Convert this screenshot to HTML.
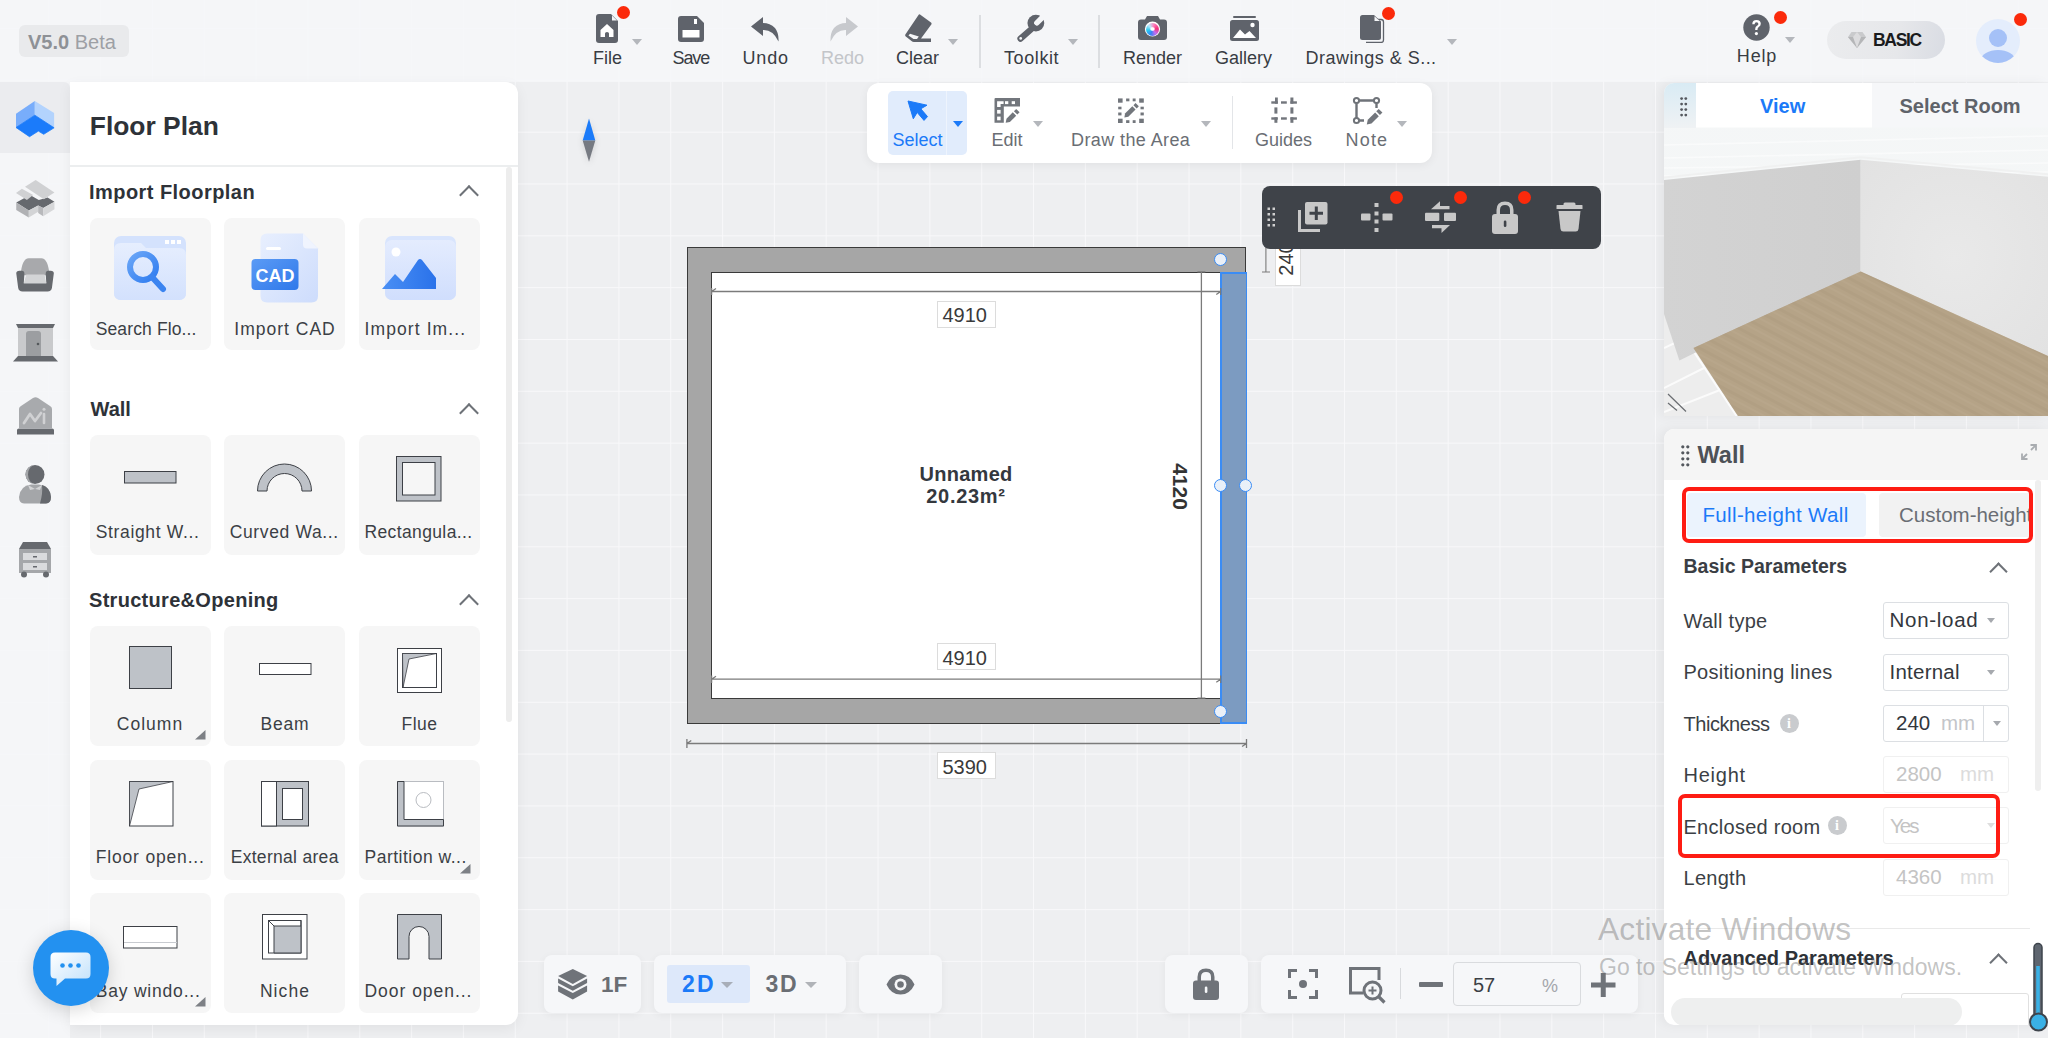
<!DOCTYPE html>
<html><head><meta charset="utf-8">
<style>
*{box-sizing:border-box;margin:0;padding:0}
html,body{width:2048px;height:1038px;overflow:hidden}
body{position:relative;font-family:"Liberation Sans",sans-serif;color:#33373d;
background-color:#eeeff1;
background-image:linear-gradient(to right,#f8f8fa 0,#f8f8fa 1px,transparent 1px),linear-gradient(to bottom,#f8f8fa 0,#f8f8fa 1px,transparent 1px);
background-size:51.84px 51.84px;background-position:48.3px 28px;}
.a{position:absolute}
.t{position:absolute;white-space:nowrap;line-height:1}
/* top bar */
#top{position:absolute;left:0;top:0;width:2048px;height:82px;background:rgba(246,247,249,0.86)}
.tb-l{font-size:18px;color:#383c43}
.tri{position:absolute;width:0;height:0;border-left:5px solid transparent;border-right:5px solid transparent;border-top:6px solid #b4b7bc}
.dot{position:absolute;width:13px;height:13px;border-radius:50%;background:#fb2a0b}
.ic{position:absolute;fill:#5f636b}
/* left */
#rail{position:absolute;left:0;top:82px;width:70px;height:956px;background:rgba(245,246,248,0.92)}
#lp{position:absolute;left:70px;top:82px;width:448px;height:943px;background:#fff;border-radius:0 12px 12px 0;overflow:hidden;box-shadow:0 4px 14px rgba(0,0,0,0.06)}
.card{position:absolute;width:121px;height:120px;background:#f6f6f6;border-radius:8px}
.clbl{font-size:17.5px;color:#3b3f45}
.card .lbl{position:absolute;left:0;width:121px;text-align:center;font-size:17.5px;color:#3b3f45;top:92px;line-height:1;white-space:nowrap}
.sec{position:absolute;left:20px;font-size:20px;font-weight:700;color:#2e3238;line-height:1}
.chev{position:absolute;width:14px;height:14px;border-left:2px solid #6e7278;border-top:2px solid #6e7278;transform:rotate(45deg)}
.dimbox{background:#fff;border:1px solid #dcdcdc}
.dimt{font-size:20px;color:#3a3a3a}
.hdl{position:absolute;width:13px;height:13px;margin:-0.25px 0 0 -0.25px;border-radius:50%;background:#eaf0f8;border:1.6px solid #3a8cf5}
.plbl{font-size:20px;color:#3b3f45;letter-spacing:0.27px}
.pval{font-size:20.5px;color:#33373d}
.pbox{position:absolute;left:218.5px;width:126.5px;height:37px;border:1.2px solid #dcdfe3;border-radius:3px;background:#fff}
.info{position:absolute;width:19px;height:19px;border-radius:50%;background:#c9cbce;color:#fff;font-size:14px;font-weight:700;text-align:center;line-height:19px;font-family:"Liberation Serif",serif}
.bbox{position:absolute;top:955px;height:58px;background:#f6f7f9;border-radius:8px;box-shadow:0 2px 8px rgba(0,0,0,0.05)}
</style></head>
<body>
<div id="top">
  <div class="a" style="left:19px;top:25px;width:110px;height:32px;background:#e9eaec;border-radius:6px"></div>
  <div class="t" style="left:28px;top:32px;font-size:20px;color:#8e9196"><b>V5.0</b> <span style="color:#9da0a5">Beta</span></div>
  <!-- File -->
  <svg class="ic" style="left:596px;top:14px" width="23" height="29" viewBox="0 0 23 29"><path d="M3 0H15L22 7V26Q22 29 19 29H3Q0 29 0 26V3Q0 0 3 0Z"/><path d="M16 1.5V6.5H21Z" fill="#f5f6f8"/><path d="M11 10L4.5 16V23H9V19.5Q9 18 11 18Q13 18 13 19.5V23H17.5V16Z" fill="#fff"/></svg>
  <div class="dot" style="left:617px;top:6px"></div>
  <div class="tri" style="left:632px;top:39px"></div>
  <div class="t tb-l" style="left:593px;top:48.7px">File</div>
  <!-- Save -->
  <svg class="ic" style="left:678px;top:16px" width="26" height="26" viewBox="0 0 26 26"><path d="M3 0H19L26 7V23Q26 26 23 26H3Q0 26 0 23V3Q0 0 3 0Z"/><rect x="16" y="3" width="3" height="5" fill="#fff"/><rect x="4.5" y="14" width="17" height="7.5" fill="#fff"/></svg>
  <div class="t tb-l" style="left:672.5px;top:48.7px;letter-spacing:-1.1px">Save</div>
  <!-- Undo -->
  <svg class="ic" style="left:751px;top:17px" width="30" height="25" viewBox="0 0 30 25"><path d="M12 0L0 9.5L12 19V13Q22 12.5 27.5 24.5Q28 16 24 11Q19 6 12 6Z"/></svg>
  <div class="t tb-l" style="left:742.5px;top:48.7px;letter-spacing:0.85px">Undo</div>
  <!-- Redo -->
  <svg class="ic" style="left:828px;top:17px;fill:#c7c9cd" width="30" height="25" viewBox="0 0 30 25"><path d="M18 0L30 9.5L18 19V13Q8 12.5 2.5 24.5Q2 16 6 11Q11 6 18 6Z"/></svg>
  <div class="t tb-l" style="left:821px;top:48.7px;color:#c3c5c9">Redo</div>
  <!-- Clear -->
  <svg class="ic" style="left:905px;top:14px" width="28" height="28" viewBox="0 0 28 28"><path d="M15 0.5L26 8.5Q27 9.5 26.3 10.5L16 24.5H26V28H9Q7.5 28 6.5 27L0.8 22.5Q-0.3 21.5 0.5 20.3L13.5 1Q14 0 15 0.5ZM5 19.8L3.5 21.5L8.5 25H12L13.8 22.5Z"/></svg>
  <div class="tri" style="left:948px;top:39px"></div>
  <div class="t tb-l" style="left:896px;top:48.7px">Clear</div>
  <div class="a" style="left:979px;top:15px;width:1.5px;height:53px;background:#dcdee1"></div>
  <!-- Toolkit -->
  <svg class="a" style="left:1016.6px;top:13.8px" width="28.3" height="29" viewBox="320 130 420 430"><circle cx="600" cy="265" r="125" fill="#5f636b"/><path d="M615 262L760 117" stroke="#f5f6f8" stroke-width="82" stroke-linecap="round"/><path d="M560 330L372 495" stroke="#5f636b" stroke-width="92" stroke-linecap="round"/><circle cx="375" cy="492" r="20" fill="#f5f6f8"/></svg>
  <div class="tri" style="left:1068px;top:39px"></div>
  <div class="t tb-l" style="left:1004px;top:48.7px;letter-spacing:0.6px">Toolkit</div>
  <div class="a" style="left:1098px;top:15px;width:1.5px;height:53px;background:#dcdee1"></div>
  <!-- Render -->
  <svg class="ic" style="left:1138px;top:16px" width="29" height="24" viewBox="0 0 29 24"><path d="M9 0H20L22 3.5H26Q29 3.5 29 6.5V21Q29 24 26 24H3Q0 24 0 21V6.5Q0 3.5 3 3.5H7Z"/><defs><radialGradient id="rg" cx="0.4" cy="0.4" r="0.6"><stop offset="0" stop-color="#fff"/><stop offset="0.35" stop-color="#f7a1d1"/><stop offset="0.7" stop-color="#5ab7f2"/><stop offset="1" stop-color="#e4407b"/></radialGradient></defs><circle cx="14.5" cy="13" r="7.6" fill="#fff"/></svg>
  <div class="a" style="left:1146px;top:22.5px;width:13px;height:13px;border-radius:50%;background:conic-gradient(from 200deg,#3a7ff5,#27c9f0,#bde9fb,#ff7ab8,#f0307a,#c06ff0,#3a7ff5)"></div><div class="a" style="left:1150.2px;top:26.7px;width:4.6px;height:4.6px;border-radius:50%;background:radial-gradient(#fff 40%,rgba(255,255,255,0))"></div>
  <div class="t tb-l" style="left:1123px;top:48.7px">Render</div>
  <!-- Gallery -->
  <svg class="ic" style="left:1230px;top:16px" width="29" height="25" viewBox="0 0 29 25"><rect x="3" y="0" width="23" height="2" rx="1"/><path d="M2.5 4H26.5Q29 4 29 6.5V22.5Q29 25 26.5 25H2.5Q0 25 0 22.5V6.5Q0 4 2.5 4Z"/><path d="M3 22L10 13.5L15 18.5L19.5 15L26 22Z" fill="#fff"/><circle cx="22.5" cy="9" r="2.2" fill="#fff"/></svg>
  <div class="t tb-l" style="left:1215px;top:48.7px">Gallery</div>
  <!-- Drawings -->
  <svg class="ic" style="left:1360px;top:15px" width="25" height="28" viewBox="0 0 25 28"><path d="M6 4.5H21Q23.5 4.5 23.5 7V25Q23.5 27.5 21 27.5H6" fill="none" stroke="#5f636b" stroke-width="1.3"/><path d="M2.5 0H14L21 6.5V22.5Q21 25 18.5 25H2.5Q0 25 0 22.5V2.5Q0 0 2.5 0Z"/><path d="M14.5 1.3V6H19.8Z" fill="#f5f6f8"/></svg>
  <div class="dot" style="left:1381.5px;top:6.5px"></div>
  <div class="tri" style="left:1447px;top:39px"></div>
  <div class="t tb-l" style="left:1305.5px;top:48.7px;letter-spacing:0.47px">Drawings &amp; S...</div>
  <!-- Help -->
  <svg class="ic" style="left:1742.5px;top:13.5px" width="27" height="27" viewBox="0 0 27 27"><circle cx="13.5" cy="13.5" r="13.2"/><path d="M9.3 10.2Q9.3 6 13.5 6Q17.8 6 17.8 9.8Q17.8 12 15.5 13.3Q14.5 14 14.5 15.5V16H12.2V15Q12.2 12.8 14 11.8Q15.4 11 15.4 9.9Q15.4 8.2 13.5 8.2Q11.6 8.2 11.6 10.2Z" fill="#fff"/><circle cx="13.4" cy="19.6" r="1.6" fill="#fff"/></svg>
  <div class="dot" style="left:1774px;top:11px"></div>
  <div class="tri" style="left:1785px;top:37px"></div>
  <div class="t tb-l" style="left:1736.8px;top:47px;letter-spacing:0.85px">Help</div>
  <!-- BASIC -->
  <div class="a" style="left:1827px;top:21px;width:118px;height:38px;border-radius:19px;background:linear-gradient(100deg,#ebecee 0%,#e6e7ea 60%,#d9dce3 100%)"></div>
  <svg class="a" style="left:1848px;top:32px" width="18" height="16" viewBox="0 0 18 16"><path d="M3.5 0H14.5L18 5L9 16L0 5Z" fill="#c9cacc"/><path d="M0 5H18L9 16Z" fill="#b5b6b8"/><path d="M5 5L9 16L13 5L9 0Z" fill="#dcdcde"/></svg>
  <div class="t" style="left:1873px;top:31.5px;font-size:17.5px;font-weight:700;color:#1a1b1d;letter-spacing:-1.3px">BASIC</div>
  <!-- Avatar -->
  <div class="a" style="left:1976px;top:19px;width:44px;height:44px;border-radius:50%;background:#e4edfc;overflow:hidden">
    <div class="a" style="left:13px;top:10px;width:18px;height:18px;border-radius:50%;background:#a5c1f7"></div>
    <div class="a" style="left:5px;top:31px;width:34px;height:20px;border-radius:50%;background:#a5c1f7"></div>
  </div>
  <div class="dot" style="left:2014px;top:12.5px"></div>
</div>

<div id="rail">
  <div class="a" style="left:0;top:0;width:70px;height:71px;background:#ebecef;border-radius:0 6px 0 0"></div>
  <!-- cube -->
  <svg class="a" style="left:15px;top:18px" width="40" height="38" viewBox="0 0 40 38"><path d="M19.8 1L1 13.8V27.5L19.8 15.2Z" fill="#78adfb"/><path d="M19.8 1L39.1 13V27.8L19.8 15.2Z" fill="#b3d3fd"/><path d="M1 27.5L19.8 15.2L39.1 27.8L28.7 34.3L23.4 31.1L14.5 36.7Z" fill="#1b7bfa" stroke="#1b7bfa" stroke-width="0.8" stroke-linejoin="round"/></svg>
  <!-- blocks -->
  <svg class="a" style="left:15px;top:95.5px" width="41.35" height="41.35" viewBox="40 60 330 330"><path d="M50 255L160 195L230 235L300 215L355 250L265 300L225 280L150 320Z" fill="#66696e"/><path d="M50 255L150 320V375L50 315Z" fill="#b0b1b4"/><path d="M150 320L225 280V330L150 375Z" fill="#d3d4d6"/><path d="M225 280L265 300V365L225 340Z" fill="#b8b9bc"/><path d="M265 300L355 250V310L265 365Z" fill="#d6d7d9"/><path d="M120 130L205 75L355 175L270 230Z" fill="#d0d1d3"/><path d="M48 180L95 145L185 195L135 235Z" fill="#d0d1d3"/></svg>
  <!-- sofa -->
  <svg class="a" style="left:15px;top:174.5px" width="40.1" height="35.7" viewBox="40 690 320 285"><path d="M85 835Q95 700 150 700H250Q305 700 315 835Z" fill="#a8a9ac"/><path d="M50 820Q50 800 75 800H95Q115 800 115 825L110 900H290L285 825Q285 800 305 800H325Q350 800 350 820L335 935Q330 965 300 965H100Q70 965 65 935Z" fill="#66696e"/><path d="M130 830H275L290 900H110Z" fill="#d3d4d6"/></svg>
  <!-- door -->
  <svg class="a" style="left:13px;top:242px" width="45" height="38" viewBox="0 0 45 38"><path d="M3 0H42L40 4H5Z" fill="#66696e"/><rect x="5" y="4" width="35" height="28" fill="#c9cacc"/><path d="M13 32V10Q13 7 16 7H25Q28 7 28 10V32Z" fill="#9c9ea1"/><circle cx="25" cy="20" r="1.3" fill="#55585c"/><path d="M5 32H40L45 37.5H0Z" fill="#66696e"/></svg>
  <!-- ai house -->
  <svg class="a" style="left:15px;top:314px" width="41" height="40" viewBox="0 0 41 40"><path d="M4 32V13Q4 11 6 10L18 2Q20.5 0.5 23 2L35 10Q37 11 37 13V32Z" fill="#a8aaad"/><path d="M9 27L15 18L20 25L26 17" stroke="#d0d1d3" stroke-width="2.8" fill="none" stroke-linecap="round" stroke-linejoin="round"/><path d="M29 18V27" stroke="#d0d1d3" stroke-width="2.6" stroke-linecap="round"/><circle cx="29" cy="13.3" r="1.5" fill="#d0d1d3"/><path d="M2 34Q2 32.5 4 32.5H37Q39 32.5 39 34V38.5H2Z" fill="#66696e"/></svg>
  <!-- person -->
  <svg class="a" style="left:18px;top:383px" width="34" height="39" viewBox="0 0 34 39"><circle cx="17" cy="9.5" r="9.5" fill="#66696e"/><path d="M17 0A9.5 9.5 0 0 0 17 19A7 9.5 0 0 1 17 0Z" fill="#a4a6a9"/><path d="M1 32Q2 21 13 19.5H21Q32 21 33 32Q33 38 28 38.5H6Q1 38 1 32Z" fill="#a4a6a9"/><path d="M24 20Q32 22 33 32Q33 38 28 38.5H22Q25 28 24 20Z" fill="#66696e"/><path d="M10 20L17 24L24 20L22 25L17 24L12 25Z" fill="#d3d4d6"/></svg>
  <!-- cabinet -->
  <svg class="a" style="left:18px;top:460px" width="34" height="36" viewBox="0 0 34 36"><path d="M5 0H29L33 7H1Z" fill="#66696e"/><rect x="1" y="7" width="32" height="24" fill="#a5a7aa"/><rect x="5" y="11" width="24" height="7" fill="#dadbdd"/><rect x="5" y="21" width="24" height="7" fill="#dadbdd"/><rect x="15" y="14" width="4" height="1.5" fill="#66696e"/><rect x="15" y="24" width="4" height="1.5" fill="#66696e"/><circle cx="6" cy="32.5" r="3" fill="#66696e"/><circle cx="28" cy="32.5" r="3" fill="#66696e"/></svg>
</div>
</div>

<div id="lp">
<div class="t" style="left:19.8px;top:31.2px;font-size:26.4px;font-weight:700;color:#2e3238">Floor Plan</div>
<div class="a" style="left:0;top:83px;width:448px;height:1.5px;background:#eceeef"></div>
<div class="a" style="left:436px;top:85px;width:6px;height:555px;background:#ededed;border-radius:3px"></div>
<div class="t sec" style="left:19px;top:100.3px;letter-spacing:0.45px">Import Floorplan</div>
<div class="chev" style="left:392px;top:106px"></div>
<div class="card" style="left:20px;top:136px;height:132px"></div>
<div class="card" style="left:154px;top:136px;height:132px"></div>
<div class="card" style="left:288.5px;top:136px;height:132px"></div>
<div class="t clbl" style="left:25.7px;top:238.9px;letter-spacing:0.13px">Search Flo...</div>
<div class="t clbl" style="left:155px;width:120px;text-align:center;top:238.9px;letter-spacing:1.0px">Import CAD</div>
<div class="t clbl" style="left:294.5px;top:238.9px;letter-spacing:1.1px">Import Im...</div>
<div class="t sec" style="left:20.5px;top:317.4px">Wall</div>
<div class="chev" style="left:392px;top:324px"></div>
<div class="card" style="left:20px;top:352.6px;height:120px"></div>
<div class="card" style="left:154px;top:352.6px;height:120px"></div>
<div class="card" style="left:288.5px;top:352.6px;height:120px"></div>
<div class="t clbl" style="left:25.7px;top:442.2px;letter-spacing:0.66px">Straight W...</div>
<div class="t clbl" style="left:159.7px;top:442.2px;letter-spacing:0.64px">Curved Wa...</div>
<div class="t clbl" style="left:294.5px;top:442.2px;letter-spacing:0.37px">Rectangula...</div>
<div class="t sec" style="left:19px;top:507.7px;letter-spacing:0.3px">Structure&amp;Opening</div>
<div class="chev" style="left:392px;top:515px"></div>
<div class="card" style="left:20px;top:544px;height:120px"></div>
<div class="card" style="left:154px;top:544px;height:120px"></div>
<div class="card" style="left:288.5px;top:544px;height:120px"></div>
<div class="card" style="left:20px;top:677.5px;height:120px"></div>
<div class="card" style="left:154px;top:677.5px;height:120px"></div>
<div class="card" style="left:288.5px;top:677.5px;height:120px"></div>
<div class="card" style="left:20px;top:811px;height:120px"></div>
<div class="card" style="left:154px;top:811px;height:120px"></div>
<div class="card" style="left:288.5px;top:811px;height:120px"></div>
<div class="t clbl" style="left:20px;width:120px;text-align:center;top:633.8px;letter-spacing:1.04px">Column</div>
<div class="t clbl" style="left:155px;width:120px;text-align:center;top:633.8px;letter-spacing:0.77px">Beam</div>
<div class="t clbl" style="left:289.5px;width:120px;text-align:center;top:633.8px;letter-spacing:0.47px">Flue</div>
<div class="t clbl" style="left:25.7px;top:767.2px;letter-spacing:0.83px">Floor open...</div>
<div class="t clbl" style="left:154.7px;width:120px;text-align:center;top:767.2px;letter-spacing:0.3px">External area</div>
<div class="t clbl" style="left:294.5px;top:767.2px;letter-spacing:0.5px">Partition w...</div>
<div class="t clbl" style="left:25.7px;top:900.6px;letter-spacing:0.8px">Bay windo...</div>
<div class="t clbl" style="left:155px;width:120px;text-align:center;top:900.6px;letter-spacing:1.1px">Niche</div>
<div class="t clbl" style="left:294.5px;top:900.6px;letter-spacing:0.97px">Door open...</div>
<svg class="a" style="left:125.1px;top:648.2px" width="11" height="10"><path d="M10.5 0V9.5H0Z" fill="#7d8085"/></svg>
<svg class="a" style="left:390.0px;top:781.7px" width="11" height="10"><path d="M10.5 0V9.5H0Z" fill="#7d8085"/></svg>
<svg class="a" style="left:125.1px;top:915.1px" width="11" height="10"><path d="M10.5 0V9.5H0Z" fill="#7d8085"/></svg>
<svg class="a" style="left:43.0px;top:152.0px" width="74" height="68" viewBox="0 0 74 68"><defs><linearGradient id="g1" x1="0" y1="0" x2="0" y2="1"><stop offset="0" stop-color="#e6eefe"/><stop offset="1" stop-color="#d3e1fd"/></linearGradient><linearGradient id="g2" x1="0" y1="0" x2="1" y2="1"><stop offset="0" stop-color="#6aa6f7"/><stop offset="1" stop-color="#2f7cf0"/></linearGradient></defs><rect x="1" y="2" width="72" height="64" rx="7" fill="#d4e2fd"/><path d="M1 16Q1 9 8 9H28L33 14H66Q73 14 73 21V59Q73 66 66 66H8Q1 66 1 59Z" fill="url(#g1)"/><rect x="52" y="6" width="4" height="4" fill="#fff"/><rect x="58" y="6" width="4" height="4" fill="#fff"/><rect x="64" y="6" width="4" height="4" fill="#fff"/><circle cx="30" cy="33" r="13" fill="none" stroke="url(#g2)" stroke-width="6"/><path d="M39 43L50 55" stroke="#3b84f0" stroke-width="6" stroke-linecap="round"/></svg>
<svg class="a" style="left:180.0px;top:150.0px" width="70" height="72" viewBox="0 0 70 72"><defs><linearGradient id="g3" x1="0" y1="0" x2="1" y2="1"><stop offset="0" stop-color="#e8effe"/><stop offset="1" stop-color="#cddcfc"/></linearGradient><linearGradient id="g4" x1="0" y1="0" x2="1" y2="1"><stop offset="0" stop-color="#5b9bf5"/><stop offset="1" stop-color="#2f78ea"/></linearGradient></defs><path d="M17 1.5H53L68 16.5V64Q68 70.5 61.5 70.5H17Q10.5 70.5 10.5 64V8Q10.5 1.5 17 1.5Z" fill="url(#g3)"/><path d="M53 1.5L68 16.5H57Q53 16.5 53 12.5Z" fill="#f0f4fe"/><rect x="16" y="15" width="15" height="3" rx="1.5" fill="#fff"/><rect x="1.5" y="27" width="47" height="31" rx="4" fill="url(#g4)"/><text x="25" y="50" text-anchor="middle" font-family="Liberation Sans" font-size="18" font-weight="700" fill="#fff">CAD</text></svg>
<svg class="a" style="left:312.0px;top:152.0px" width="76" height="70" viewBox="0 0 76 70"><defs><linearGradient id="g5" x1="0" y1="0" x2="0" y2="1"><stop offset="0" stop-color="#e4ecfe"/><stop offset="1" stop-color="#d0defd"/></linearGradient><linearGradient id="g6" x1="0" y1="0" x2="1" y2="0"><stop offset="0" stop-color="#4a8ff4"/><stop offset="1" stop-color="#2a72ea"/></linearGradient></defs><rect x="3" y="2" width="71" height="64" rx="7" fill="#d9e5fd"/><rect x="3" y="6" width="71" height="60" rx="7" fill="url(#g5)"/><circle cx="14" cy="18" r="4.5" fill="#fff"/><path d="M0 55L13 40L21 48L36 26Q38 24 40 26L54 44V55Z" fill="url(#g6)"/></svg>
<svg class="a" style="left:54.0px;top:389.0px" width="53" height="13" viewBox="0 0 53 13"><rect x="0.5" y="0.5" width="51.5" height="11.5" fill="#bec2c8" stroke="#3d4046" stroke-width="1"/></svg>
<svg class="a" style="left:187.0px;top:381.0px" width="55" height="29" viewBox="0 0 55 29"><path d="M0.5 28A27 27 0 0 1 54.5 28H45A17.5 17.5 0 0 0 10 28Z" fill="#bec2c8" stroke="#3d4046" stroke-width="1"/></svg>
<svg class="a" style="left:326.0px;top:374.0px" width="46" height="46" viewBox="0 0 46 46"><rect x="0.5" y="0.5" width="44.5" height="44.5" fill="#bec2c8" stroke="#3d4046"/><rect x="6.5" y="6.5" width="32.5" height="32.5" fill="#f6f6f6" stroke="#3d4046"/></svg>
<svg class="a" style="left:59.0px;top:564.0px" width="44" height="44" viewBox="0 0 44 44"><rect x="0.5" y="0.5" width="42" height="42" fill="#bec2c8" stroke="#3d4046"/></svg>
<svg class="a" style="left:188.5px;top:581.0px" width="53" height="13" viewBox="0 0 53 13"><rect x="0.5" y="0.5" width="51.5" height="11" fill="#fff" stroke="#3d4046"/></svg>
<svg class="a" style="left:327.0px;top:566.0px" width="46" height="46" viewBox="0 0 46 46"><rect x="0.5" y="0.5" width="44" height="44" fill="#fff" stroke="#3d4046"/><rect x="5.5" y="5.5" width="34" height="34" fill="#fff" stroke="#3d4046"/><path d="M5.5 5.5H39.5L12 11L6 39.5Z" fill="#bec2c8" stroke="#3d4046" stroke-width="0.8"/></svg>
<svg class="a" style="left:59.0px;top:699.0px" width="45" height="46" viewBox="0 0 45 46"><rect x="0.5" y="0.5" width="43.5" height="44.5" fill="#fff" stroke="#3d4046"/><path d="M0.5 0.5H44L10 8L0.5 45Z" fill="#bec2c8" stroke="#3d4046" stroke-width="0.8"/></svg>
<svg class="a" style="left:190.5px;top:699.0px" width="48" height="46" viewBox="0 0 48 46"><rect x="0.5" y="0.5" width="47" height="44.5" fill="#bec2c8" stroke="#3d4046"/><rect x="0.5" y="0.5" width="15" height="44.5" fill="#fff" stroke="#3d4046"/><rect x="21.5" y="7.5" width="20" height="31" fill="#fff" stroke="#3d4046"/></svg>
<svg class="a" style="left:327.0px;top:699.0px" width="47" height="46" viewBox="0 0 47 46"><rect x="0.5" y="0.5" width="46" height="44.5" fill="#fff" stroke="#b9bcc1"/><path d="M0.5 0.5H7V38.5H46.5V45H0.5Z" fill="#bec2c8" stroke="#3d4046"/><circle cx="26.5" cy="19" r="7.5" fill="none" stroke="#b9bcc1"/></svg>
<svg class="a" style="left:53.0px;top:844.0px" width="55" height="23" viewBox="0 0 55 23"><rect x="0.5" y="0.5" width="53.5" height="21.5" fill="#fff" stroke="#3d4046"/><path d="M1 16.5H54" stroke="#c8cbd0"/></svg>
<svg class="a" style="left:192.0px;top:832.0px" width="46" height="46" viewBox="0 0 46 46"><rect x="0.5" y="0.5" width="44.5" height="44.5" fill="#fff" stroke="#3d4046"/><rect x="6.5" y="6.5" width="32.5" height="32.5" fill="#fff" stroke="#3d4046"/><path d="M12 12H39V39H12Z" fill="#bec2c8" stroke="#3d4046"/><path d="M6.5 6.5L12 12M39 6.5V12" stroke="#3d4046"/></svg>
<svg class="a" style="left:327.0px;top:832.0px" width="46" height="46" viewBox="0 0 46 46"><path d="M0.5 0.5H44.5V45H32V22.5A10 10 0 0 0 12 22.5V45H0.5Z" fill="#bec2c8" stroke="#3d4046"/></svg>
</div>

<!-- compass -->
<svg class="a" style="left:582px;top:118px;filter:drop-shadow(0 2px 3px rgba(0,0,0,0.12))" width="14" height="45" viewBox="0 0 14 45"><path d="M7 0.5L13.3 22.5H0.7Z" fill="#1b7bf9"/><path d="M0.7 22.5H13.3L7 43.7Z" fill="#767a82"/></svg>
<!-- floating toolbar -->
<div class="a" style="left:867px;top:83px;width:565px;height:80px;background:#fff;border-radius:12px;box-shadow:0 2px 10px rgba(0,0,0,0.06)"></div>
<div class="a" style="left:888px;top:91px;width:79px;height:64px;background:#e1ecfc;border-radius:5px"></div>
<div class="a" style="left:946px;top:91px;width:1px;height:64px;background:#eef4fd"></div>
<svg class="a" style="left:907px;top:100px" width="22" height="22" viewBox="0 0 22 22"><path d="M1 1L20 5.2L13.8 8.8L20.5 16.6L17 20.4L10.2 12.4L6.3 18.8Z" fill="#1b7af8" stroke="#1b7af8" stroke-width="1" stroke-linejoin="round"/></svg>
<div class="tri" style="left:952.5px;top:121px;border-top-color:#1b7af8"></div>
<div class="t" style="left:892.5px;top:130.9px;font-size:18px;color:#1b7af8">Select</div>
<svg class="a" style="left:994px;top:97px;fill:#72767c" width="27" height="27" viewBox="0 0 27 27"><path d="M0.5 2Q0.5 0.9 1.6 0.9H26V9.6H9.8V25.8H0.5Z"/><path d="M3.1 4.2H9.6V7.1H6.6V10H3.1Z" fill="#fff"/><rect x="11" y="4.2" width="3.3" height="2.9" fill="#fff"/><rect x="17.7" y="4.2" width="3.3" height="2.9" fill="#fff"/><rect x="3.1" y="12.9" width="3.5" height="3.7" fill="#fff"/><rect x="3.1" y="19.6" width="3.5" height="3.7" fill="#fff"/><path d="M11.7 25.8L15.87 25.03L22.2 18.7L18.8 15.3L12.47 21.63Z"/><path d="M23.33 17.57L25.59 15.31L22.19 11.91L19.93 14.17Z"/></svg>
<div class="tri" style="left:1032.5px;top:121px"></div>
<div class="t" style="left:991.5px;top:130.9px;font-size:18px;color:#6a6e74">Edit</div>
<svg class="a" style="left:1118px;top:97.5px;fill:#72767c" width="27" height="27" viewBox="0 0 27 27"><rect x="0" y="0.4" width="4.6" height="4.3"/><rect x="21.2" y="0.4" width="4.6" height="4.3"/><rect x="0" y="20.7" width="4.6" height="4.3"/><rect x="21.2" y="20.7" width="4.6" height="4.3"/><rect x="8.1" y="0.5" width="3.3" height="2.8"/><rect x="14.7" y="0.5" width="2.9" height="2.8"/><rect x="8.1" y="22.2" width="3.3" height="2.8"/><rect x="14.7" y="22.2" width="2.9" height="2.8"/><rect x="0.2" y="8.7" width="3.3" height="2.6"/><rect x="0.2" y="14.5" width="3.3" height="2.9"/><rect x="22.5" y="8.7" width="3.3" height="2.6"/><rect x="22.5" y="14.5" width="3.3" height="2.9"/><path d="M6.4 19.5L10.29 18.87L17.58 11.58L14.32 8.32L7.03 15.61Z"/><path d="M18.71 10.45L20.83 8.33L17.57 5.07L15.45 7.19Z"/></svg>
<div class="tri" style="left:1200.5px;top:121px"></div>
<div class="t" style="left:1071px;top:130.9px;font-size:18px;color:#6a6e74;letter-spacing:0.4px">Draw the Area</div>
<div class="a" style="left:1231.5px;top:96px;width:1.5px;height:53px;background:#e3e5e8"></div>
<svg class="a" style="left:1271px;top:97px;fill:#72767c" width="27" height="27" viewBox="0 0 27 27"><rect x="4" y="0.5" width="2.8" height="6.2"/><rect x="0.3" y="4.3" width="6.5" height="2.4"/><rect x="10" y="4.3" width="5.8" height="2.4"/><rect x="19.4" y="0.5" width="3" height="6.2"/><rect x="19.4" y="4.3" width="6.5" height="2.4"/><rect x="3.4" y="10.4" width="3" height="6.2"/><rect x="19.4" y="10.4" width="3" height="6.2"/><rect x="0.3" y="20.3" width="6.5" height="2.4"/><rect x="3.4" y="20.3" width="3" height="5.5"/><rect x="10" y="20.3" width="5.8" height="2.4"/><rect x="19.4" y="20.3" width="6.5" height="2.4"/><rect x="19.4" y="20.3" width="3" height="5.5"/></svg>
<div class="t" style="left:1255px;top:130.9px;font-size:18px;color:#6a6e74">Guides</div>
<svg class="a" style="left:1352.5px;top:97px;overflow:visible" width="30" height="27" viewBox="0 0 30 27"><path d="M3.5 3.5H23.5M3.5 3.5V23.5M23.5 3.5V11M3.5 23.5H11" stroke="#6f7379" stroke-width="2.4" fill="none"/><circle cx="3.5" cy="3.5" r="2.6" fill="#fff" stroke="#6f7379" stroke-width="2"/><circle cx="23.5" cy="3.5" r="2.6" fill="#fff" stroke="#6f7379" stroke-width="2"/><circle cx="3.5" cy="23.5" r="2.6" fill="#fff" stroke="#6f7379" stroke-width="2"/><path d="M13.8 27.5L18.47 26.51L25.84 19.14L22.16 15.46L14.79 22.83Z" fill="#72767c"/><path d="M26.93 18.05L29.41 15.57L25.73 11.89L23.25 14.37Z" fill="#72767c"/></svg>
<div class="tri" style="left:1396.5px;top:121px"></div>
<div class="t" style="left:1345.5px;top:130.9px;font-size:18px;color:#6a6e74;letter-spacing:1.2px">Note</div>

<!-- floor plan -->
<div class="a" style="left:686.5px;top:246.5px;width:559.5px;height:477px;background:#a6a6a6;border:1px solid #3a3a3a"></div>
<div class="a" style="left:711px;top:271.5px;width:510px;height:427px;background:#fff;border:1.2px solid #3a3a3a"></div>
<div class="a" style="left:1220px;top:271.5px;width:26.5px;height:452px;background:#7c9bc1;border:2px solid #3a8cf5;border-right-width:1.6px"></div>
<svg class="a" style="left:680px;top:240px;overflow:visible" width="600" height="560" viewBox="0 0 600 560">
 <g stroke="#7b7b7b" stroke-width="1.3" fill="none">
  <path d="M31.6 51.5H540.7M31.6 48V55M540.7 48V55M31.6 51.5L36 48.5M540.7 51.5L536.3 54.5"/>
  <path d="M31.6 439.2H540.7M31.6 435.5V443M540.7 435.5V443M31.6 439.2L36 436.2M540.7 439.2L536.3 442.2"/>
  <path d="M521.4 31.8V458.2M517.4 31.8H525.4M517.4 458.2H525.4"/>
  <path d="M6.9 503.5H566.5M6.9 499V508M566.5 499V508M6.9 503.5L11.3 500.5M566.5 503.5L562.1 506.5"/>
 </g>
 <g stroke="#7b7b7b" stroke-width="1.1"><path d="M585.9 6V32M582 32H590"/></g>
</svg>
<div class="a dimbox" style="left:936.5px;top:300.5px;width:59.5px;height:27px"></div>
<div class="t dimt" style="left:942.5px;top:305px">4910</div>
<div class="a dimbox" style="left:936.5px;top:643px;width:59.5px;height:27px"></div>
<div class="t dimt" style="left:942.5px;top:647.5px">4910</div>
<div class="a dimbox" style="left:936.5px;top:752px;width:59.5px;height:27px"></div>
<div class="t dimt" style="left:942.5px;top:756.5px">5390</div>
<div class="a dimbox" style="left:1274.5px;top:234px;width:26px;height:52px"></div>
<div class="t dimt" style="left:1269px;top:249px;transform:rotate(-90deg);transform-origin:center">240</div>
<div class="t" style="left:1156.5px;top:476px;font-size:21px;font-weight:700;color:#333;transform:rotate(90deg)">4120</div>
<div class="t" style="left:866px;top:462.8px;width:200px;text-align:center;font-size:20px;font-weight:700;color:#34383e;line-height:22.3px"><span style="letter-spacing:0.28px">Unnamed</span><br><span style="letter-spacing:0.7px">20.23m&sup2;</span></div>
<div class="hdl" style="left:1214.5px;top:253.5px"></div>
<div class="hdl" style="left:1214.5px;top:479px"></div>
<div class="hdl" style="left:1239.5px;top:479px"></div>
<div class="hdl" style="left:1214.5px;top:705px"></div>

<!-- dark toolbar -->
<div class="a" style="left:1261.5px;top:185.5px;width:339.5px;height:63px;background:#3f4349;border-radius:8px"></div>
<svg class="a" style="left:1267px;top:207px;fill:#d0d0d0" width="9" height="20" viewBox="0 0 9 20"><rect x="0.5" y="0.5" width="2.5" height="2.5"/><rect x="5.5" y="0.5" width="2.5" height="2.5"/><rect x="0.5" y="6" width="2.5" height="2.5"/><rect x="5.5" y="6" width="2.5" height="2.5"/><rect x="0.5" y="11.5" width="2.5" height="2.5"/><rect x="5.5" y="11.5" width="2.5" height="2.5"/><rect x="0.5" y="17" width="2.5" height="2.5"/><rect x="5.5" y="17" width="2.5" height="2.5"/></svg>
<svg class="a" style="left:1297.5px;top:202px;fill:#c8c8c8" width="30" height="30" viewBox="0 0 30 30"><path d="M0 8H3V27H22V30H0Z"/><rect x="7" y="0" width="22.5" height="22.5" rx="2"/><path d="M16.8 4.5H19.8V9.8H25V12.8H19.8V18H16.8V12.8H11.5V9.8H16.8Z" fill="#3f4349"/></svg>
<svg class="a" style="left:1361px;top:203px;fill:#c8c8c8" width="32" height="29" viewBox="0 0 32 29"><rect x="13.5" y="0" width="4" height="4"/><rect x="13.5" y="8.5" width="4" height="4"/><rect x="13.5" y="16.5" width="4" height="4"/><rect x="13.5" y="25" width="4" height="4"/><rect x="0" y="10.5" width="9.5" height="7" rx="1"/><rect x="21.5" y="10.5" width="10" height="7" rx="1"/></svg>
<div class="dot" style="left:1389.5px;top:191px"></div>
<svg class="a" style="left:1425px;top:201px;fill:#c8c8c8" width="32" height="33" viewBox="0 0 32 33"><path d="M6 8.2L15 0.3V5H24.5V8.2Z"/><path d="M7 24H25L16.5 32V27.2H7Z"/><rect x="0" y="11.8" width="14.3" height="8.2" rx="1"/><rect x="19" y="11.8" width="12" height="8.2" rx="1"/></svg>
<div class="dot" style="left:1453.5px;top:191px"></div>
<svg class="a" style="left:1492px;top:200.5px;fill:#c8c8c8" width="26" height="33" viewBox="0 0 26 33"><path d="M4.5 13V9Q4.5 0.5 13 0.5Q21.5 0.5 21.5 9V13H18V9Q18 4 13 4Q8 4 8 9V13Z"/><rect x="0" y="13" width="26" height="20" rx="3"/><rect x="11.8" y="19.5" width="2.6" height="6.5" rx="1.3" fill="#3f4349"/></svg>
<div class="dot" style="left:1517.5px;top:191px"></div>
<svg class="a" style="left:1555.5px;top:202px;fill:#c8c8c8" width="27" height="30" viewBox="0 0 27 30"><path d="M9 0.5H18Q19.5 0.5 19.5 2V3H26Q26.5 3 26.5 3.5V7H0.5V3.5Q0.5 3 1 3H7.5V2Q7.5 0.5 9 0.5Z"/><path d="M2.5 9H24.5L22.5 27Q22.2 29.5 19.7 29.5H7.3Q4.8 29.5 4.5 27Z"/></svg>
<!-- bottom toolbars -->
<div class="bbox" style="left:544px;width:97px"></div>
<svg class="a" style="left:558px;top:968px;fill:#6f7379" width="30" height="32" viewBox="558 968 30 32"><path d="M572.8 969L587.1 975.9L572.8 983.9L558.1 975.9Z"/><path d="M558.1 978.5L572.8 986.2L587.1 978.5V983L572.8 990.7L558.1 983Z"/><path d="M558.1 985.5L572.8 993L587.1 985.5V991.5L572.8 999.4L558.1 991.5Z"/></svg>
<div class="t" style="left:601px;top:973.9px;font-size:22.5px;font-weight:700;color:#6a6e74">1F</div>
<div class="bbox" style="left:653.5px;width:192px"></div>
<div class="a" style="left:666.5px;top:965px;width:83px;height:38px;background:#dde8fa;border-radius:3px"></div>
<div class="t" style="left:682px;top:973.4px;font-size:23px;font-weight:700;color:#1b7af8;letter-spacing:2.3px">2D</div>
<div class="tri" style="left:721px;top:982px;border-top-color:#a8aeb8;border-left-width:6px;border-right-width:6px;border-top-width:6.5px"></div>
<div class="t" style="left:765.5px;top:973.4px;font-size:23px;font-weight:700;color:#6a6e74;letter-spacing:1.8px">3D</div>
<div class="tri" style="left:804.5px;top:982px;border-top-color:#b0b3b8;border-left-width:6px;border-right-width:6px;border-top-width:6.5px"></div>
<div class="bbox" style="left:858.5px;width:83px"></div>
<svg class="a" style="left:885.5px;top:973.5px" width="29" height="21" viewBox="0 0 29 21"><path d="M14.5 0.5Q24 0.5 28.5 10.5Q24 20.5 14.5 20.5Q5 20.5 0.5 10.5Q5 0.5 14.5 0.5Z" fill="#6f7379"/><circle cx="14.5" cy="10.5" r="6" fill="#f6f7f9"/><circle cx="14.5" cy="10.5" r="3.3" fill="#6f7379"/></svg>
<div class="bbox" style="left:1165px;width:83px"></div>
<svg class="a" style="left:1193px;top:968px;fill:#6f7379" width="26" height="32" viewBox="0 0 26 32"><path d="M4.5 13V9Q4.5 0.5 13 0.5Q21.5 0.5 21.5 9V13H18V9Q18 4 13 4Q8 4 8 9V13Z"/><rect x="0" y="12.5" width="26" height="19.5" rx="3"/><rect x="11.8" y="18.5" width="2.6" height="6.5" rx="1.3" fill="#f6f7f9"/></svg>
<div class="bbox" style="left:1261px;width:377px"></div>
<svg class="a" style="left:1287.5px;top:969px" width="30" height="30" viewBox="0 0 30 30"><path d="M1.5 9V1.5H9M21 1.5H28.5V9M28.5 21V28.5H21M9 28.5H1.5V21" stroke="#6f7379" stroke-width="3" fill="none"/><circle cx="15" cy="15" r="4" fill="#6f7379"/></svg>
<svg class="a" style="left:1349px;top:966.5px" width="37" height="37" viewBox="0 0 37 37"><path d="M14 26H1.5V1.5H30V13" stroke="#6f7379" stroke-width="3" fill="none"/><circle cx="23.5" cy="23.5" r="8.5" fill="#f6f7f9" stroke="#6f7379" stroke-width="3"/><path d="M29.5 29.5L35.5 35.5" stroke="#6f7379" stroke-width="3.2"/><path d="M23.5 19.5V27.5M19.5 23.5H27.5" stroke="#6f7379" stroke-width="2"/></svg>
<div class="a" style="left:1400px;top:968px;width:1.3px;height:31px;background:#d8dadd"></div>
<div class="a" style="left:1418.5px;top:981.5px;width:24px;height:5.5px;background:#6f7379;border-radius:1px"></div>
<div class="a" style="left:1453px;top:962px;width:127.5px;height:44px;border:1.3px solid #d9dbde;border-radius:4px"></div>
<div class="t" style="left:1473px;top:975.2px;font-size:20px;color:#3b3f45">57</div>
<div class="t" style="left:1542px;top:976.9px;font-size:18px;color:#a3a6ab">%</div>
<svg class="a" style="left:1590.5px;top:972.5px" width="25" height="24" viewBox="0 0 25 24"><path d="M12.25 0V24M0 12H24.5" stroke="#6f7379" stroke-width="5"/></svg>

<!-- chat bubble -->
<div class="a" style="left:32.5px;top:930px;width:76px;height:76px;border-radius:50%;background:#2391f0;box-shadow:0 4px 18px rgba(0,0,0,0.16)"></div>
<svg class="a" style="left:50px;top:952px" width="41" height="35" viewBox="0 0 41 35"><defs><linearGradient id="cb" x1="0" y1="0" x2="1" y2="1"><stop offset="0" stop-color="#ffffff"/><stop offset="1" stop-color="#bfe0fb"/></linearGradient></defs><path d="M5 0.5H36Q40.5 0.5 40.5 5V22Q40.5 26.5 36 26.5H15L6.5 34V26.5H5Q0.5 26.5 0.5 22V5Q0.5 0.5 5 0.5Z" fill="url(#cb)"/><circle cx="12.5" cy="13.5" r="2.3" fill="#2391f0"/><circle cx="20.5" cy="13.5" r="2.3" fill="#2391f0"/><circle cx="28.5" cy="13.5" r="2.3" fill="#2391f0"/></svg>
<!-- RIGHT PANEL -->
<div class="a" style="left:1664px;top:83px;width:384px;height:333px;border-radius:10px 0 0 0;overflow:hidden;box-shadow:-4px 0 12px rgba(0,0,0,0.05)">
 <svg class="a" style="left:0;top:0" width="384" height="333" viewBox="1664 83 384 333">
  <defs>
   <linearGradient id="sky" x1="0" y1="0" x2="0" y2="1"><stop offset="0" stop-color="#f4f6f7"/><stop offset="0.4" stop-color="#f5f7f7"/><stop offset="0.75" stop-color="#f9fafa"/><stop offset="1" stop-color="#fbfbfb"/></linearGradient>
   <linearGradient id="tl" x1="0" y1="0" x2="0" y2="1"><stop offset="0" stop-color="#d9ebf4"/><stop offset="1" stop-color="#eff2f4"/></linearGradient>
   <linearGradient id="lw" x1="0" y1="0" x2="1" y2="0"><stop offset="0" stop-color="#d3d3d3"/><stop offset="1" stop-color="#cfcfcf"/></linearGradient>
   <radialGradient id="rw" cx="0.5" cy="0.5" r="0.7"><stop offset="0" stop-color="#e9e9e9"/><stop offset="1" stop-color="#e2e2e2"/></radialGradient>
   <pattern id="wood" patternUnits="userSpaceOnUse" width="12" height="12" patternTransform="rotate(28)"><rect width="12" height="12" fill="#b6a488"/><rect y="0" width="12" height="3" fill="#ad9b7f"/><rect y="6" width="12" height="2" fill="#bdac90"/></pattern>
  </defs>
  <rect x="1664" y="83" width="384" height="333" fill="url(#sky)"/>
  <g stroke="#ffffff" stroke-width="1.5" opacity="0.5"><path d="M1664 158L2048 150M1664 168L2048 163M1664 176L2048 172M1664 145L2048 136"/></g>
  <rect x="1664" y="83" width="32" height="45" fill="url(#tl)"/>
  <rect x="1696" y="83" width="176" height="44.5" fill="#fff"/>
  <rect x="1872" y="83" width="176" height="44.5" fill="#f6f7f9"/>
  <path d="M1664 290L1700 340L1738 416L1664 416Z" fill="#ededed"/><g stroke="#fbfbfb" stroke-width="2"><path d="M1694 352L1738 418M1664 348L1679 341M1664 388L1704 368M1664 412L1720 390"/></g><path d="M1664 180L1860.7 159.7L1860.7 271.4L1679.4 360.4L1664 314Z" fill="url(#lw)"/>
  <path d="M1860.7 159.7L2048 176.7L2048 356L1860.7 271.4Z" fill="url(#rw)"/>
  <path d="M1664 177.5L1860.7 157.2L2048 174.2" stroke="#f0f1f1" stroke-width="2" fill="none"/>
  
  
  <path d="M1668 394L1686 411.5M1668 403L1677 410.5" stroke="#6a6d71" stroke-width="1.2"/>
  <path d="M1860.7 271.4L2048 356L2048 416L1738 416L1693.5 347.9Z" fill="url(#wood)"/>
  <path d="M1860.7 271.4L2048 356L2048 416L1738 416L1693.5 347.9Z" fill="#b4a386" opacity="0.55"/>
 </svg>
 <svg class="a" style="left:16px;top:13.5px;fill:#55595f" width="8" height="20" viewBox="0 0 8 20"><circle cx="1.6" cy="1.6" r="1.4"/><circle cx="5.8" cy="1.6" r="1.4"/><circle cx="1.6" cy="7.1" r="1.4"/><circle cx="5.8" cy="7.1" r="1.4"/><circle cx="1.6" cy="12.6" r="1.4"/><circle cx="5.8" cy="12.6" r="1.4"/><circle cx="1.6" cy="18.1" r="1.4"/><circle cx="5.8" cy="18.1" r="1.4"/></svg>
 <div class="t" style="left:96px;top:13.3px;font-size:20px;font-weight:700;color:#1b7af8">View</div>
 <div class="t" style="left:235.5px;top:13.3px;font-size:20px;font-weight:700;color:#5f636a">Select Room</div>
</div>

<div class="a" style="left:1664px;top:429px;width:384px;height:596px;background:#fff;border-radius:10px 0 0 10px;overflow:hidden;box-shadow:-4px 0 12px rgba(0,0,0,0.05)">
 <div class="a" style="left:0;top:0;width:384px;height:51px;background:#f5f5f5"></div>
 <svg class="a" style="left:16.5px;top:16px;fill:#55595f" width="9" height="22" viewBox="0 0 9 22"><circle cx="1.8" cy="1.8" r="1.6"/><circle cx="6.8" cy="1.8" r="1.6"/><circle cx="1.8" cy="7.8" r="1.6"/><circle cx="6.8" cy="7.8" r="1.6"/><circle cx="1.8" cy="13.8" r="1.6"/><circle cx="6.8" cy="13.8" r="1.6"/><circle cx="1.8" cy="19.8" r="1.6"/><circle cx="6.8" cy="19.8" r="1.6"/></svg>
 <div class="t" style="left:33.5px;top:14.9px;font-size:23.5px;font-weight:700;color:#4d5157">Wall</div>
 <svg class="a" style="left:356.5px;top:15px" width="16" height="16" viewBox="0 0 16 16"><path d="M9.5 1H15V6.5M15 1L10 6M6.5 15H1V9.5M1 15L6 10" stroke="#a9acb0" stroke-width="1.8" fill="none"/></svg>
 <div class="a" style="left:23px;top:64px;width:179px;height:43.5px;background:#ebf3fd;border-radius:4px"></div>
 <div class="a" style="left:215px;top:64px;width:150px;height:43.5px;background:#f2f2f2;border-radius:4px 0 0 4px"></div>
 <div class="t" style="left:38.5px;top:75.6px;font-size:20.5px;color:#1b7af8;letter-spacing:0.35px">Full-height Wall</div>
 <div class="a" style="left:215px;top:64px;width:150px;height:43.5px;overflow:hidden"><div class="t" style="left:20px;top:11.6px;font-size:20.5px;color:#6a6e74">Custom-height Wall</div></div>
 <div class="a" style="left:18px;top:58px;width:351px;height:56px;border:4px solid #fe1c13;border-radius:7px"></div>
 <div class="t" style="left:19.5px;top:128.0px;font-size:19.5px;font-weight:700;color:#3a3e44">Basic Parameters</div>
 <div class="chev" style="left:328px;top:136px;width:13px;height:13px"></div>
 <div class="a" style="left:371px;top:51px;width:6px;height:311px;background:#efefef;border-radius:3px"></div>
 <div class="t plbl" style="left:19.5px;top:181.9px">Wall type</div>
 <div class="a pbox" style="top:173.0px"></div><div class="t pval" style="left:225.6px;top:181.4px;letter-spacing:0.7px">Non-load</div><div class="tri" style="left:323px;top:189.0px;border-top-color:#a6a9ae;border-left-width:4.5px;border-right-width:4.5px;border-top-width:5.5px"></div>
 <div class="t plbl" style="left:19.5px;top:233.2px">Positioning lines</div>
 <div class="a pbox" style="top:224.7px"></div><div class="t pval" style="left:225.6px;top:232.7px;letter-spacing:0.21px">Internal</div><div class="tri" style="left:323px;top:240.7px;border-top-color:#a6a9ae;border-left-width:4.5px;border-right-width:4.5px;border-top-width:5.5px"></div>
 <div class="t plbl" style="left:19.5px;top:284.5px;letter-spacing:-0.45px">Thickness</div>
 <div class="a pbox" style="top:276.0px"></div><div class="a" style="left:319px;top:277.0px;width:1px;height:35px;background:#dcdfe3"></div><div class="t pval" style="left:232px;top:284.0px">240</div><div class="t pval" style="left:277px;top:284.0px;color:#c3c5c9">mm</div><div class="tri" style="left:328.5px;top:292.0px;border-top-color:#a6a9ae;border-left-width:4.5px;border-right-width:4.5px;border-top-width:5.5px"></div>
 <div class="t plbl" style="left:19.5px;top:335.8px;letter-spacing:0.77px">Height</div>
 <div class="a pbox" style="top:327.3px;border-color:#f0f0f0"></div><div class="t pval" style="left:232px;top:335.3px;color:#c4c4c4">2800</div><div class="t pval" style="left:296px;top:335.3px;color:#dcdcdc">mm</div>
 <div class="t plbl" style="left:19.5px;top:387.6px">Enclosed room</div>
 <div class="a pbox" style="top:378.2px;border-color:#f0f0f0"></div><div class="t pval" style="left:226px;top:387.1px;color:#c4c4c4;letter-spacing:-2px">Yes</div><div class="tri" style="left:323px;top:394.2px;border-top-color:#dedede;border-left-width:4.5px;border-right-width:4.5px;border-top-width:5.5px"></div>
 <div class="t plbl" style="left:19.5px;top:438.9px">Length</div>
 <div class="a pbox" style="top:429.6px;border-color:#f0f0f0"></div><div class="t pval" style="left:232px;top:438.4px;color:#c4c4c4">4360</div><div class="t pval" style="left:296px;top:438.4px;color:#dcdcdc">mm</div>
 <div class="info" style="left:115.5px;top:284.5px">i</div>
 <div class="info" style="left:163.5px;top:387px">i</div>
 <div class="a" style="left:14px;top:364.5px;width:322px;height:64.5px;border:4px solid #fe1c13;border-radius:7px"></div>
 <div class="a" style="left:16px;top:498.5px;width:350px;height:1.5px;background:#e9e9e9"></div>
 <div class="t" style="left:19.5px;top:518.5px;font-size:20px;font-weight:700;color:#2e3238">Advanced Parameters</div>
 <div class="chev" style="left:328px;top:527px;width:13px;height:13px"></div>
 <div class="a" style="left:236.5px;top:563.5px;width:128px;height:40px;border:1px solid #e0e0e0;border-radius:3px"></div>
 <div class="a" style="left:6.5px;top:569px;width:291px;height:28px;background:#eeefef;border-radius:14px"></div>
</div>
<!-- thermometer -->
<svg class="a" style="left:2028px;top:942px" width="20" height="92" viewBox="0 0 20 92"><rect x="6" y="1.5" width="8" height="76" rx="4" fill="#5f6670" stroke="#3e444c" stroke-width="1.5"/><rect x="8.2" y="24" width="3.6" height="60" fill="#3ab1e6"/><circle cx="10.5" cy="80" r="8.5" fill="#3ab1e6" stroke="#3e444c" stroke-width="2"/></svg>
<!-- watermark -->
<div class="t" style="left:1598px;top:913.7px;font-size:31.7px;color:rgba(110,110,110,0.42);letter-spacing:0.2px">Activate Windows</div>
<div class="t" style="left:1599px;top:955.5px;font-size:23px;color:rgba(110,110,110,0.42)">Go to Settings to activate Windows.</div>
</body></html>
